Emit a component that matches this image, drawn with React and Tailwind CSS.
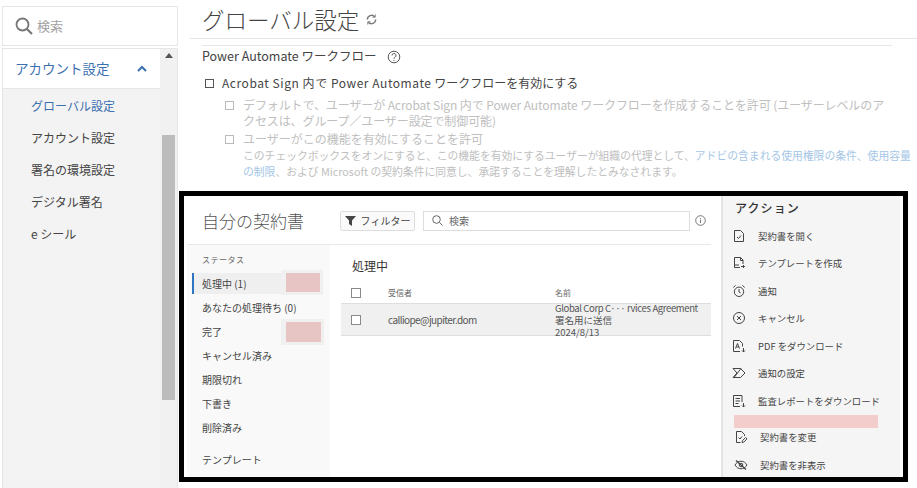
import React from "react";

const JP = { fontFamily: '"Noto Sans CJK JP", "Noto Sans", sans-serif' };

const NAV = ["グローバル設定", "アカウント設定", "署名の環境設定", "デジタル署名", "e シール"];
const STATUS = ["キャンセル済み", "期限切れ", "下書き", "削除済み"];

// icon frame
const Ico = ({ children, size = 14, className = "" }) => (
  <svg width={size} height={size} viewBox="0 0 14 14" fill="none" stroke="#444" strokeWidth="1" className={`shrink-0 ${className}`}>
    {children}
  </svg>
);

const ACTIONS = [
  {
    label: "契約書を開く",
    icon: (
      <Ico>
        <path d="M2.500 1.500h6l3 3v8h-9z" />
        <path d="M5 8l1.500 1.500L9 6.500" />
      </Ico>
    ),
  },
  {
    label: "テンプレートを作成",
    icon: (
      <Ico>
        <path d="M8 11.500H2.500v-10h6l2.500 2.500v4" />
        <path d="M8.500 1.500v3H11M2.500 9H7" />
        <path d="M9 10.500h3.500M11 9l1.500 1.500L11 12" />
      </Ico>
    ),
  },
  {
    label: "通知",
    icon: (
      <Ico>
        <circle cx="7" cy="7.800" r="4.700" />
        <path d="M7 5v3l1.600 1M1.300 3.400L3.600 1.400M12.700 3.400l-2.300-2" />
      </Ico>
    ),
  },
  {
    label: "キャンセル",
    icon: (
      <Ico>
        <circle cx="7" cy="7" r="5.500" />
        <path d="M5 5l4 4M9 5l-4 4" />
      </Ico>
    ),
  },
  {
    label: "PDF をダウンロード",
    icon: (
      <Ico>
        <path d="M8 12.500H1.500v-11h6l3 3v3" />
        <path d="M3.500 9.500L5.500 4.500l2 5M4.400 8h2.200" />
        <path d="M11.500 9v4M10 11.500l1.500 1.500 1.500-1.500" />
      </Ico>
    ),
  },
  {
    label: "通知の設定",
    icon: (
      <Ico>
        <path d="M1 2.500h7.500l4.500 4.500-4.500 4.500H1l4-4.500z" />
        <path d="M2 11.500L9 2.500" />
      </Ico>
    ),
  },
  {
    label: "監査レポートをダウンロード",
    icon: (
      <Ico>
        <path d="M8 12.500H1.500v-11H10v6.500" />
        <path d="M3.500 4.500H8M3.500 7H8M3.500 9.500h3" />
        <path d="M11.500 9v4M10 11.500l1.500 1.500 1.500-1.500" />
      </Ico>
    ),
  },
];

const ACTIONS_2 = [
  {
    label: "契約書を変更",
    icon: (
      <Ico>
        <path d="M10.500 6V4.500l-3-3h-5v11h4" />
        <path d="M4.500 7.500L6 9l2-2.500" />
        <path d="M8 12.500l.4-1.800 3.200-3.200 1.400 1.400-3.200 3.200z" />
      </Ico>
    ),
  },
  {
    label: "契約書を非表示",
    icon: (
      <Ico>
        <path d="M1 7c1.500-2.500 3.500-3.800 6-3.800S11.500 4.500 13 7c-1.500 2.500-3.500 3.800-6 3.800S2.500 9.500 1 7z" />
        <circle cx="7" cy="7" r="1.800" />
        <path d="M2 2.500l10 9" strokeWidth="1.300" />
      </Ico>
    ),
  },
];

const Box = ({ className = "" }) => <span className={`block border border-[#8a8a8a] bg-white ${className}`} />;

const Redaction = ({ className = "" }) => (
  <div className={`absolute bg-[#f0f0f0] py-[3px] pl-[5px] pr-[3px] ${className}`}>
    <div className="h-full w-full bg-[#e8c5c5]" />
  </div>
);

function Sidebar() {
  return (
    <aside className="flex h-full w-[178px] shrink-0 flex-col pl-[2px] pt-[6px]">
      <div className="flex h-[40px] shrink-0 items-center gap-[3px] border border-[#e6e6e6] pl-[11px]">
        <svg width="20" height="20" viewBox="0 0 20 20" fill="none" stroke="#777" strokeWidth="1.800">
          <circle cx="8.500" cy="8.500" r="6" />
          <path d="M13 13l5 5" strokeWidth="2.200" />
        </svg>
        <span className="text-[13px] text-[#a2a2a2]">検索</span>
      </div>
      <div className="mt-[2px] flex min-h-0 flex-1 border-x border-t border-[#e6e6e6]">
        <div className="flex-1 bg-[#f3f3f3]">
          <div className="flex h-[40px] items-center justify-between border-b border-[#e6e6e6] bg-white pl-[12px] pr-[13px]">
            <span className="text-[13.500px] text-[#3a6fb0]">アカウント設定</span>
            <svg width="10" height="7" viewBox="0 0 10 7" fill="none" stroke="#3a6fb0" strokeWidth="2">
              <path d="M1 6l4-4 4 4" />
            </svg>
          </div>
          <ul className="pl-[28px] pt-[1px]">
            {NAV.map((n, i) => (
              <li key={n} className={`flex h-[32px] items-center text-[12px] ${i === 0 ? "text-[#3a6fb0]" : "text-[#444]"}`}>
                {n}
              </li>
            ))}
          </ul>
        </div>
        <div className="flex w-[17px] shrink-0 flex-col items-center bg-[#f1f1f1] px-[2px] pb-[88px]">
          <svg width="8" height="5" viewBox="0 0 8 5" className="mb-[77px] mt-[4px] shrink-0">
            <path d="M4 0l4 5H0z" fill="#555" />
          </svg>
          <div className="w-full flex-1 bg-[#bcbcbc]" />
        </div>
      </div>
    </aside>
  );
}

function Settings() {
  return (
    <section className="pl-[24px]">
      <div className="-ml-[12px] flex h-[39px] items-center gap-[6px] border-b border-[#e6e6e6] pl-[12px]">
        <h1 className="text-[22.500px] font-light leading-none text-[#444]">グローバル設定</h1>
        <svg width="13" height="13" viewBox="0 0 14 14" fill="none" stroke="#777" strokeWidth="1.500">
          <path d="M2.500 7a4.500 4.500 0 0 1 8-2.800M11.500 7a4.500 4.500 0 0 1-8 2.800" />
          <path d="M11 1.500v3H8M3 12.500v-3h3" strokeWidth="1" />
        </svg>
      </div>
      <div className="mt-[6px] w-[690px] border-t border-[#e6e6e6]" />
      <div className="flex h-[21px] items-center gap-[10px] text-[12.500px] text-[#444]">
        <span>Power Automate ワークフロー</span>
        <svg width="14" height="14" viewBox="0 0 14 14" fill="none" stroke="#555">
          <circle cx="7" cy="7" r="5.800" />
          <path d="M5 5.500a2 2 0 1 1 3 1.700c-.7.400-1 .8-1 1.500M7 10v1" />
        </svg>
      </div>
      <label className="mt-[7px] flex h-[18px] items-center gap-[8px] text-[12px] text-[#444]">
        <Box className="ml-[3px] h-[9px] w-[9px] !border-[#555]" />
        <span>
          <span className="tracking-[0.55px]">Acrobat Sign 内で Power Automate</span> ワークフローを有効にする
        </span>
      </label>
      <div className="mt-[5px] pl-[23px] text-[12px] leading-[16px] text-[#c0c0c0]">
        <div className="flex gap-[9px]">
          <Box className="mt-[4px] h-[9px] w-[9px] shrink-0 !border-[#bbb]" />
          <p className="w-[645px] tracking-[-0.1px]">デフォルトで、ユーザーが Acrobat Sign 内で Power Automate ワークフローを作成することを許可 (ユーザーレベルのアクセスは、グループ／ユーザー設定で制御可能)</p>
        </div>
        <div className="mt-[2px] flex gap-[9px]">
          <Box className="mt-[4px] h-[9px] w-[9px] shrink-0 !border-[#bbb]" />
          <div>
            <p>ユーザーがこの機能を有効にすることを許可</p>
            <p className="w-[672px] text-[10.800px]">
              このチェックボックスをオンにすると、この機能を有効にするユーザーが組織の代理として、
              <span className="text-[#a5c6e6]">アドビの含まれる使用権限の条件、使用容量の制限</span>
              、および Microsoft の契約条件に同意し、承諾することを理解したとみなされます。
            </p>
          </div>
        </div>
      </div>
    </section>
  );
}

function Agreements() {
  return (
    <div className="absolute left-[179px] top-[191px] flex h-[291px] w-[729px] border-[5px] border-black bg-white">
      <div className="flex w-[537px] shrink-0 flex-col">
        <div className="ml-[3px] mr-[10px] flex h-[49px] shrink-0 items-center border-b border-[#e8e8e8] pl-[15px] pt-[1px]">
          <h2 className="w-[138px] text-[17px] font-light text-[#555]">自分の契約書</h2>
          <button className="flex h-[20px] w-[75px] items-center justify-center gap-[5px] rounded-[2px] border border-[#ddd] bg-[#fafafa] text-[10px] text-[#444]">
            <svg width="11" height="11" viewBox="0 0 11 11"><path d="M0 1h11L7 5.500V11L4 9V5.500z" fill="#444" /></svg>
            フィルター
          </button>
          <div className="ml-[8px] flex h-[20px] w-[267px] items-center gap-[6px] border border-[#ddd] pl-[8px] text-[10px] text-[#666]">
            <svg width="11" height="11" viewBox="0 0 11 11" fill="none" stroke="#666"><circle cx="4.500" cy="4.500" r="3.800" /><path d="M7.500 7.500L10.500 10.500" /></svg>
            検索
          </div>
          <svg width="11" height="11" viewBox="0 0 11 11" fill="none" stroke="#777" className="ml-[5px]"><circle cx="5.500" cy="5.500" r="4.800" /><path d="M5.500 3v.9M5.500 4.800V8" /></svg>
        </div>
        <div className="flex flex-1">
          <div className="relative ml-[3px] w-[143px] shrink-0 bg-[#f9f9f9] text-[10px] text-[#444]">
            <p className="pl-[15px] pt-[10px] text-[8px] leading-[10px] tracking-[0.06em] text-[#666]">ステータス</p>
            <div className="ml-[5px] mt-[8px] flex h-[21px] w-[95px] items-center border-l-2 border-[#2f74c0] bg-[#efefef] pl-[8px]">処理中 (1)</div>
            <div className="mt-[3px] flex h-[21px] items-center pl-[15px]">あなたの処理待ち (0)</div>
            <div className="mt-[3px] flex h-[21px] items-center pl-[15px]">完了</div>
            {STATUS.map((s) => (
              <div key={s} className="mt-[3px] flex h-[21px] items-center pl-[15px]">{s}</div>
            ))}
            <div className="mt-[11px] flex h-[21px] items-center pl-[15px]">テンプレート</div>
            <Redaction className="left-[94px] top-[25px] h-[25px] w-[42px]" />
            <Redaction className="left-[94px] top-[74px] h-[26px] w-[43px]" />
          </div>
          <div className="flex-1 pl-[11px] pr-[10px]">
            <p className="pl-[11px] pt-[12px] text-[12px] leading-[18px] text-[#333]">処理中</p>
            <div className="mt-[8px] flex h-[20px] items-center text-[8px] text-[#666]">
              <Box className="ml-[10px] h-[10px] w-[10px]" />
              <span className="ml-[27px] w-[167px]">受信者</span>
              <span>名前</span>
            </div>
            <div className="flex h-[33px] items-center border-y border-[#dedede] bg-[#f0f0f0] text-[#555]">
              <Box className="ml-[10px] h-[10px] w-[10px] shrink-0" />
              <span className="ml-[27px] w-[167px] shrink-0 text-[10px] tracking-[-0.6px]">calliope@jupiter.dom</span>
              <div className="whitespace-nowrap text-[9.500px] leading-[12px]">
                <p className="tracking-[-0.36px]">Global Corp C··· rvices Agreement</p>
                <p>署名用に送信</p>
                <p>2024/8/13</p>
              </div>
            </div>
          </div>
        </div>
      </div>
      <div className="mr-[3px] flex flex-1 flex-col border-l-2 border-[#e4e4e4] bg-[#f5f5f5]">
        <p className="shrink-0 pl-[12px] pt-[3px] text-[12px] font-medium leading-[18px] tracking-[0.09em] text-[#333]">アクション</p>
        <ul className="mt-[5px] shrink-0 text-[9.400px] text-[#444]">
          {ACTIONS.map((a) => (
            <li key={a.label} className="flex h-[27.500px] items-center gap-[12px] pl-[9px]">
              {a.icon}
              <span>{a.label}</span>
            </li>
          ))}
        </ul>
        <div className="ml-[11px] h-[13px] w-[144px] shrink-0 bg-[#f3cccc]" />
        <ul className="-mt-[4px] shrink-0 text-[9.400px] text-[#444]">
          {ACTIONS_2.map((a) => (
            <li key={a.label} className="flex h-[27.500px] items-center gap-[12px] pl-[11px]">
              {a.icon}
              <span>{a.label}</span>
            </li>
          ))}
        </ul>
      </div>
    </div>
  );
}

export default function App() {
  return (
    <div className="relative flex h-[488px] w-[917px] overflow-hidden bg-white" style={JP}>
      <Sidebar />
      <main className="min-w-0 flex-1">
        <Settings />
      </main>
      <Agreements />
    </div>
  );
}
